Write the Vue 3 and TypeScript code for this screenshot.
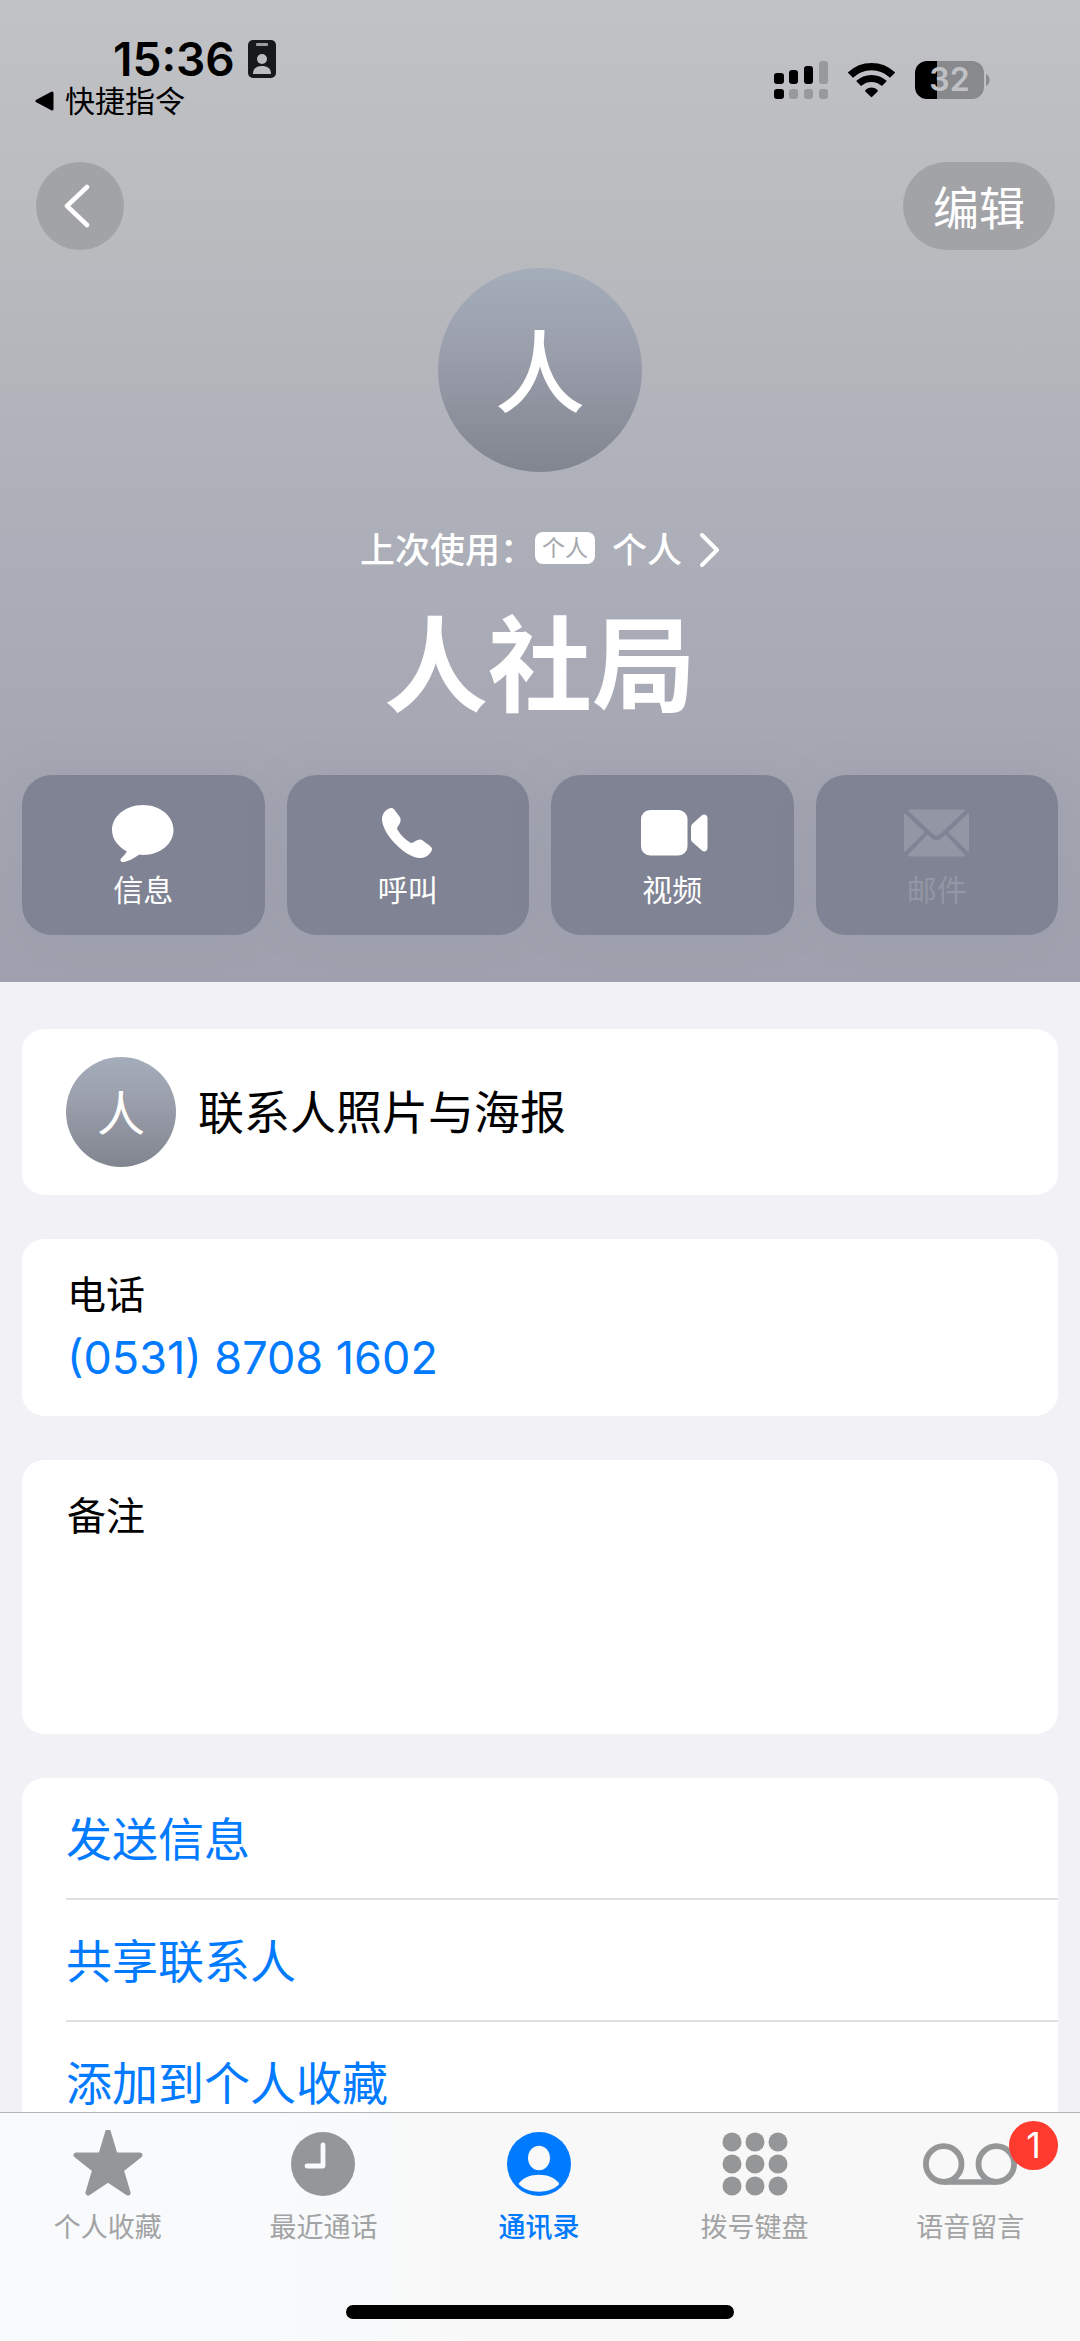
<script setup lang="ts">
interface QuickAction {
  id: string
  label: string
  disabled?: boolean
}

interface Tab {
  id: string
  label: string
  badge?: number
}

const contact = {
  initial: '人',
  name: '人社局',
  line: '个人',
  phone: '(0531) 8708 1602',
}

const quickActions: QuickAction[] = [
  { id: 'message', label: '信息' },
  { id: 'call', label: '呼叫' },
  { id: 'video', label: '视频' },
  { id: 'mail', label: '邮件', disabled: true },
]

const listActions: string[] = ['发送信息', '共享联系人', '添加到个人收藏']

const tabs: Tab[] = [
  { id: 'favorites', label: '个人收藏' },
  { id: 'recents', label: '最近通话' },
  { id: 'contacts', label: '通讯录' },
  { id: 'keypad', label: '拨号键盘' },
  { id: 'voicemail', label: '语音留言', badge: 1 },
]

const activeTab = 'contacts'
const keyColumns = [10, 33, 56]
const keyRows = [10, 32, 54]
</script>

<template>
  <div class="app">
    <main class="content">
      <header class="hero">
        <div class="status">
          <div class="status-left">
            <div class="clock">
              <span>15:36</span>
              <svg width="30" height="40" viewBox="0 0 30 40" aria-hidden="true">
                <rect x="1" y="1" width="28" height="38" rx="5" fill="#17191a" />
                <rect x="9" y="4" width="12" height="3" rx="1" fill="#9a9b9e" />
                <ellipse cx="15" cy="20" rx="5" ry="5" fill="#bcbdc1" />
                <path d="M6 35C6 29 10 27 15 27S24 29 24 35Z" fill="#bcbdc1" />
              </svg>
            </div>
            <a class="return" href="#">
              <svg width="20" height="22" viewBox="0 0 20 22" aria-hidden="true">
                <path d="M2 11L17 3V19Z" stroke="#000" stroke-width="3" stroke-linejoin="round" />
              </svg>
              <span>快捷指令</span>
            </a>
          </div>
          <div class="status-right">
            <svg width="54" height="38" viewBox="0 0 54 38" aria-hidden="true">
              <g fill="#000">
                <rect x="0" y="12" width="10" height="11" rx="3" />
                <rect x="15" y="9" width="9" height="14" rx="3" />
                <rect x="30" y="5" width="9" height="18" rx="3" />
                <rect x="0" y="28" width="10" height="10" rx="3" />
              </g>
              <g fill="#98999c">
                <rect x="45" y="0" width="9" height="23" rx="3" />
                <rect x="15" y="28" width="9" height="10" rx="3" />
                <rect x="30" y="28" width="9" height="10" rx="3" />
                <rect x="45" y="28" width="9" height="10" rx="3" />
              </g>
            </svg>
            <svg width="47" height="36" viewBox="0 0 47 36" aria-hidden="true">
              <g fill="none" stroke="#000">
                <path d="M2.4 13.2A30.3 30.3 0 0 1 44.6 13.2" stroke-width="7.4" />
                <path d="M10.6 21.6A18.6 18.6 0 0 1 36.4 21.6" stroke-width="7" />
              </g>
              <path d="M17.3 28.3C20.5 24.7 26.5 24.7 29.7 28.3Q30.2 29 29.6 29.6L24.2 34.8Q23.5 35.5 22.8 34.8L17.4 29.6Q16.8 29 17.3 28.3Z" />
            </svg>
            <div class="battery">
              <span class="cell">32</span>
              <svg width="4" height="12" viewBox="0 0 4 12" aria-hidden="true">
                <path d="M0 0C5 2 5 10 0 12Z" fill="#8c8d90" />
              </svg>
            </div>
          </div>
        </div>

        <nav class="nav">
          <button class="back" type="button" aria-label="返回">
            <svg width="26" height="44" viewBox="0 0 26 44" aria-hidden="true">
              <path d="M23 3L3 22L23 41" fill="none" stroke="#fff" stroke-width="4.5" stroke-linecap="round" stroke-linejoin="round" />
            </svg>
          </button>
          <button class="edit" type="button">编辑</button>
        </nav>

        <div class="avatar">{{ contact.initial }}</div>

        <button class="last-used" type="button">
          <span>上次使用：</span>
          <span class="sim">{{ contact.line }}</span>
          <span class="line">{{ contact.line }}</span>
          <svg width="20" height="34" viewBox="0 0 20 34" aria-hidden="true">
            <path d="M2 2L17 17L2 32" fill="none" stroke="#fff" stroke-width="4" stroke-linecap="round" stroke-linejoin="round" />
          </svg>
        </button>

        <h1 class="name">{{ contact.name }}</h1>

        <div class="quick">
          <button v-for="action in quickActions" :key="action.id" type="button" :disabled="action.disabled">
            <span class="quick-icon">
              <svg v-if="action.id === 'message'" width="62" height="57" viewBox="0 0 62 57" aria-hidden="true">
                <path d="M31 0C48 0 61.5 11 61.5 25S48 50 31 50L27.5 49.5C22 53 17 56.5 11 57C8.5 57 8 55 9 53.5C11.5 51 13.5 49 14.8 46.5C6 41.5 0 34 0 25C0 11 14 0 31 0Z" />
              </svg>
              <svg v-else-if="action.id === 'call'" width="51" height="51" viewBox="0 0 51 51" aria-hidden="true">
                <path d="M9.5 0C11 0 12 1 13 2.5L17.5 8.5C19 11 19 13 17.5 16L15.5 19C14.7 20.5 15 21 16 22.5C19 27.5 24 32 28 34.5C29 35.2 30 35 31 34.5L35.5 32C37.5 31 39 31.2 41 32.7L48 38C50 39.5 50.5 41 49.5 43C47 47.5 43 50 38 50C30 50 20 43 12 34.5C4 26 0 17 0 11C0 5 5 0 9.5 0Z" />
              </svg>
              <svg v-else-if="action.id === 'video'" width="66" height="46" viewBox="0 0 66 46" overflow="visible" aria-hidden="true">
                <g transform="translate(2 0)">
                  <rect width="46.5" height="45.5" rx="9" />
                  <path d="M50 17Q50 15 51.5 13.7L61 5.3Q62.5 4 64.5 4.7Q66.5 5.5 66.5 8V38Q66.5 40.5 64.5 41.2Q62.5 41.8 61 40.5L51.5 32.3Q50 31 50 29Z" />
                </g>
              </svg>
              <svg v-else width="65" height="48" viewBox="0 0 65 48" aria-hidden="true">
                <path d="M5.5 .5H59.5Q62 .5 60 2.5L36 25Q32.5 28.5 29 25L5 2.5Q3 .5 5.5 .5Z" />
                <path d="M0 6Q0 3.5 1.8 5.3L20 22.5Q20.8 23.3 20 24L1.8 42Q0 43.7 0 41.5Z" />
                <path d="M65 6Q65 3.5 63.2 5.3L45 22.5Q44.2 23.3 45 24L63.2 42Q65 43.7 65 41.5Z" />
                <path d="M5 45L23.5 25.5L27.5 29.3Q32.5 33.5 37.5 29.3L41.5 25.5L60 45Q62 47.5 59.5 47.5H5.5Q3 47.5 5 45Z" />
              </svg>
            </span>
            <span class="quick-label">{{ action.label }}</span>
          </button>
        </div>
      </header>

      <div class="sections">
        <section>
          <button class="photo" type="button">
            <span class="avatar small">{{ contact.initial }}</span>
            <span>联系人照片与海报</span>
          </button>
        </section>

        <section class="phone">
          <h2 class="label">电话</h2>
          <a class="number" href="tel:053187081602">{{ contact.phone }}</a>
        </section>

        <section class="notes">
          <label class="label" for="notes">备注</label>
          <textarea id="notes"></textarea>
        </section>

        <section>
          <ul class="actions">
            <li v-for="label in listActions" :key="label">
              <button type="button">{{ label }}</button>
            </li>
          </ul>
        </section>
      </div>
    </main>

    <footer class="tabbar">
      <nav class="tabs">
        <button v-for="tab in tabs" :key="tab.id" type="button" class="tab" :class="{ active: tab.id === activeTab }">
          <span class="tab-icon">
            <svg v-if="tab.id === 'favorites'" width="70" height="68" viewBox="0 0 70 68" aria-hidden="true">
              <path d="M35 1.800L42 25.200H66.700L48 39.800L54.800 62.800L35 49.500L15.200 62.800L22 39.800L3.300 25.200H28Z" fill="currentColor" stroke="currentColor" stroke-width="5.500" stroke-linejoin="round" />
            </svg>
            <svg v-else-if="tab.id === 'recents'" width="64" height="64" viewBox="0 0 64 64" aria-hidden="true">
              <circle cx="32" cy="32" r="32" fill="currentColor" />
              <path d="M32 13V34H16" fill="none" stroke="#f8fafb" stroke-width="4.800" stroke-linecap="round" stroke-linejoin="round" />
            </svg>
            <svg v-else-if="tab.id === 'contacts'" width="64" height="64" viewBox="0 0 64 64" aria-hidden="true">
              <circle cx="32" cy="32" r="32" fill="currentColor" />
              <ellipse cx="32" cy="26" rx="11" ry="12.200" fill="#f9f9f9" />
              <path d="M12.500 53C11.500 52 11.800 51.200 13 50C17 45.500 23.500 42.700 32 42.700S47 45.500 51 50C52.200 51.200 52.500 52 51.500 53C46.500 57.500 40 59.700 32 59.700S17.500 57.500 12.500 53Z" fill="#f9f9f9" />
            </svg>
            <svg v-else-if="tab.id === 'keypad'" width="66" height="64" viewBox="0 0 66 64" fill="currentColor" aria-hidden="true">
              <template v-for="y in keyRows" :key="y">
                <circle v-for="x in keyColumns" :key="x" :cx="x" :cy="y" r="9.500" />
              </template>
            </svg>
            <svg v-else width="94" height="42" viewBox="0 0 94 42" fill="none" stroke="currentColor" aria-hidden="true">
              <circle cx="20.700" cy="21" r="17.800" stroke-width="5.800" />
              <circle cx="73.300" cy="21" r="17.800" stroke-width="5.800" />
              <path d="M20.700 39H73.300" stroke-width="5.400" />
            </svg>
            <span v-if="tab.badge" class="badge">{{ tab.badge }}</span>
          </span>
          <span class="tab-label">{{ tab.label }}</span>
        </button>
      </nav>
      <div class="home-indicator"></div>
    </footer>
  </div>
</template>

<style>
body {
  margin: 0;
  background: #f1f1f6;
}
</style>

<style scoped>
.app {
  display: flex;
  flex-direction: column;
  height: 100vh;
  font-family: Inter, "Noto Sans CJK SC", sans-serif;
  font-size: 46px;
  line-height: 60px;
  color: #000;
}

button {
  margin: 0;
  padding: 0;
  border: 0;
  background: none;
  color: inherit;
  font: inherit;
}

a {
  color: inherit;
  text-decoration: none;
}

svg {
  display: block;
  flex: none;
}

.content {
  flex: 1;
  min-height: 0;
  overflow-y: auto;
  scrollbar-width: none;
}

.hero {
  display: flex;
  flex-direction: column;
  align-items: center;
  padding-bottom: 47px;
  background: linear-gradient(#c1c2c6 0%, #b9babe 26%, #adb0b9 52%, #a5a7b3 76%, #9fa1ae 100%);
  color: #fff;
}

.status {
  display: flex;
  justify-content: space-between;
  align-self: stretch;
  height: 128px;
  padding: 34px 90px 0 35px;
  color: #000;
}

.clock {
  display: flex;
  align-items: center;
  gap: 12px;
  padding-left: 78px;
  line-height: 50px;
  font-weight: 600;
}

.return {
  display: flex;
  align-items: center;
  gap: 10px;
  font-size: 30px;
  line-height: 34px;
}

.status-right {
  display: flex;
  align-items: center;
  height: 92px;
  gap: 20px;
}

.battery {
  display: flex;
  align-items: center;
  gap: 2px;
}

.cell {
  width: 69px;
  border-radius: 12px;
  background: linear-gradient(90deg, #000 32%, #88898c 32%);
  color: #c0c1c5;
  font-size: 32px;
  line-height: 38px;
  font-weight: 600;
  text-align: center;
}

.nav {
  display: flex;
  justify-content: space-between;
  align-self: stretch;
  padding: 0 25px 0 36px;
}

.back,
.edit {
  display: flex;
  align-items: center;
  justify-content: center;
  height: 88px;
  border-radius: 44px;
  background: #a2a3a7;
}

.back {
  width: 88px;
  padding-right: 6px;
  box-sizing: border-box;
}

.edit {
  padding: 4px 30px 0;
  box-sizing: border-box;
}

.avatar {
  width: 204px;
  height: 204px;
  margin-top: 18px;
  border-radius: 50%;
  background: linear-gradient(#a4adba, #9b9fac 40%, #81858f);
  color: #fff;
  font-size: 90px;
  line-height: 212px;
  font-weight: 500;
  text-align: center;
}

.last-used {
  display: flex;
  align-items: center;
  margin-top: 58px;
  font-size: 35px;
  line-height: 40px;
  font-weight: 500;
}

.sim {
  width: 60px;
  margin-bottom: 4px;
  border-radius: 8px;
  background: #fff;
  color: #a5a7ac;
  font-size: 23px;
  line-height: 32px;
  font-weight: 400;
}

.line {
  margin: 0 18px 0 17px;
}

.name {
  margin: 36px 0 49px;
  font-size: 104px;
  line-height: 120px;
  font-weight: 700;
}

.quick {
  display: grid;
  grid-template-columns: repeat(4, 1fr);
  align-self: stretch;
  gap: 22px;
  padding: 0 22px;
}

.quick button {
  display: flex;
  flex-direction: column;
  align-items: center;
  height: 160px;
  padding-top: 28px;
  border-radius: 30px;
  background: #808393;
  box-shadow: 0 0 40px rgba(128, 131, 147, 0.15);
  box-sizing: border-box;
  fill: #fff;
}

.quick button:disabled {
  color: #9396a4;
  fill: #9396a4;
}

.quick-icon {
  display: flex;
  align-items: center;
  height: 60px;
}

.quick-label {
  margin-top: 8px;
  font-size: 30px;
  line-height: 38px;
}

.sections {
  display: flex;
  flex-direction: column;
  gap: 44px;
  padding: 47px 22px 44px;
  background: #f1f1f6;
}

section {
  border-radius: 22px;
  background: #fff;
}

.photo {
  display: flex;
  align-items: center;
  gap: 22px;
  width: 100%;
  padding: 28px 44px;
}

.small {
  width: 110px;
  height: 110px;
  margin: 0;
  font-size: 48px;
  line-height: 114px;
  font-weight: 400;
}

.label {
  display: block;
  margin: 0;
  font-size: 39px;
  line-height: 48px;
  font-weight: 400;
}

.phone {
  padding: 32px 45px 28px;
}

.number {
  display: block;
  margin-top: 9px;
  font-size: 45px;
  color: #007aff;
}

.notes {
  padding: 32px 45px;
}

.notes textarea {
  display: block;
  width: 100%;
  height: 162px;
  padding: 0;
  border: 0;
  outline: 0;
  background: none;
  font: inherit;
  resize: none;
}

.actions {
  margin: 0;
  padding: 0 0 0 44px;
  list-style: none;
}

.actions li + li {
  border-top: 2px solid #e0e0e2;
}

.actions button {
  width: 100%;
  height: 120px;
  padding: 2px 0 0;
  color: #007aff;
  text-align: left;
}

.tabbar {
  display: flex;
  flex-direction: column;
  align-items: center;
  justify-content: space-between;
  height: 229px;
  padding: 17px 0 22px;
  border-top: 1px solid #b2b2b4;
  background: linear-gradient(90deg, #f8fafc 0%, #f8fafc 25%, #f8f8f8 45%);
  box-sizing: border-box;
}

.tabs {
  display: grid;
  grid-template-columns: repeat(5, 1fr);
  width: 100%;
  padding-right: 2px;
  box-sizing: border-box;
}

.tab {
  display: flex;
  flex-direction: column;
  align-items: center;
  color: #959697;
}

.tab-icon {
  position: relative;
  display: flex;
  align-items: center;
  height: 68px;
}

.tab-label {
  margin-top: 13px;
  color: #a2a3a4;
  font-size: 27px;
  line-height: 34px;
}

.active,
.active .tab-label {
  color: #007aff;
}

.active .tab-label {
  font-weight: 500;
}

.badge {
  position: absolute;
  top: -9px;
  left: 86px;
  width: 49px;
  height: 49px;
  border-radius: 50%;
  background: #ff3b30;
  color: #fff;
  font-size: 36px;
  line-height: 49px;
  text-align: center;
}

.home-indicator {
  width: 36%;
  height: 14px;
  border-radius: 7px;
  background: #000;
}
</style>
